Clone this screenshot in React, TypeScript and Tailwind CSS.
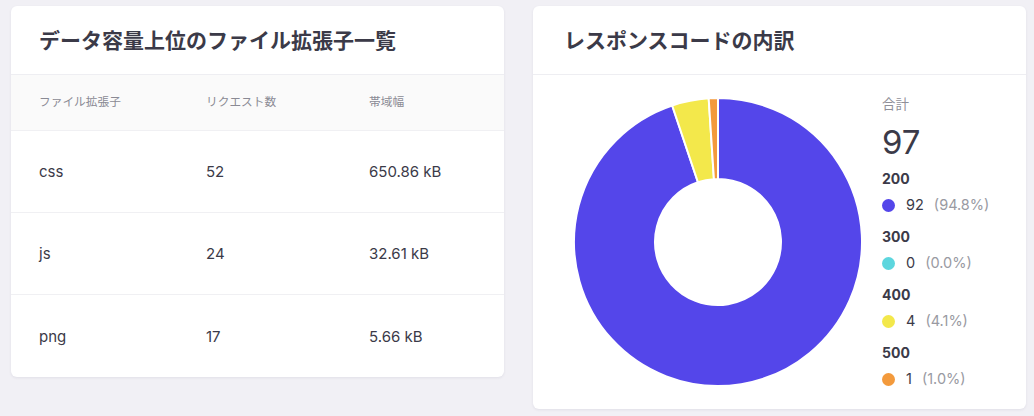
const extensions = [
  { ext: 'css', requests: 52, size: '650.86 kB' },
  { ext: 'js', requests: 24, size: '32.61 kB' },
  { ext: 'png', requests: 17, size: '5.66 kB' },
]

const codes = [
  { code: '200', count: 92, color: '#5446ea' },
  { code: '300', count: 0, color: '#5dd6de' },
  { code: '400', count: 4, color: '#f3e84b' },
  { code: '500', count: 1, color: '#f39a3c' },
]

const total = codes.reduce((s, c) => s + c.count, 0)

function arcPath(cx: number, cy: number, r: number, ir: number, a0: number, a1: number) {
  const p = (rad: number, a: number) => [cx + rad * Math.cos(a), cy + rad * Math.sin(a)]
  const large = a1 - a0 > Math.PI ? 1 : 0
  const [x0, y0] = p(r, a0)
  const [x1, y1] = p(r, a1)
  const [x2, y2] = p(ir, a1)
  const [x3, y3] = p(ir, a0)
  return `M${x0} ${y0} A${r} ${r} 0 ${large} 1 ${x1} ${y1} L${x2} ${y2} A${ir} ${ir} 0 ${large} 0 ${x3} ${y3} Z`
}

function Donut() {
  let start = -Math.PI / 2
  const slices = codes
    .filter((c) => c.count > 0)
    .map((c) => {
      const end = start + (c.count / total) * Math.PI * 2
      const d = arcPath(146, 146, 144, 63, start, end)
      start = end
      return <path key={c.code} d={d} fill={c.color} stroke="#fff" strokeWidth={2} strokeLinejoin="round" />
    })
  return (
    <svg width={292} height={292} viewBox="0 0 292 292">
      {slices}
    </svg>
  )
}

export default function App() {
  return (
    <div
      className="w-[1034px] h-[416px] bg-[#f1f0f5] pl-[11px] pt-[6px] flex items-start gap-[29px] text-[#3b3a48]"
      style={{ fontFamily: 'Inter, "Noto Sans CJK JP", sans-serif' }}
    >
      {/* file extension table */}
      <div className="w-[493px] bg-white rounded-md shadow-[0_1px_3px_rgba(40,40,80,0.08)] overflow-hidden">
        <div className="h-[69px] px-[28px] pt-[2px] flex items-center border-b border-[#eeeef2]">
          <h2 className="text-[21px] font-semibold">データ容量上位のファイル拡張子一覧</h2>
        </div>
        <div className="h-[56px] bg-[#fafafa] px-[28px] flex items-center text-[11.7px] text-[#8a8a94] border-b border-[#f0f0f3]">
          <div className="w-[167px]">ファイル拡張子</div>
          <div className="w-[163px]">リクエスト数</div>
          <div>帯域幅</div>
        </div>
        {extensions.map((r, i) => (
          <div
            key={r.ext}
            className={`h-[82px] px-[28px] pt-[2px] flex items-center text-[15px] ${i < extensions.length - 1 ? 'border-b border-[#f0f0f3]' : ''}`}
          >
            <div className="w-[167px]">{r.ext}</div>
            <div className="w-[163px]">{r.requests}</div>
            <div>{r.size}</div>
          </div>
        ))}
      </div>

      {/* response code breakdown */}
      <div className="w-[493px] bg-white rounded-md shadow-[0_1px_3px_rgba(40,40,80,0.08)]">
        <div className="h-[69px] px-[31px] pt-[2px] flex items-center border-b border-[#eeeef2]">
          <h2 className="text-[21px] font-semibold">レスポンスコードの内訳</h2>
        </div>
        <div className="h-[334px] flex">
          <div className="pl-[39px] pt-[21px] w-[349px]">
            <Donut />
          </div>
          <div className="pt-[18px]">
            <div className="text-[13.5px] text-[#8f8f98] leading-[22px]">合計</div>
            <div className="text-[33px] leading-[38px] mt-[8px]">{total}</div>
            <div className="mt-[8px] flex flex-col gap-[11px]">
              {codes.map((c) => (
                <div key={c.code}>
                  <div className="text-[14px] font-bold leading-[20px]">{c.code}</div>
                  <div className="flex items-center text-[14.5px] leading-[22px] mt-[5px]">
                    <span className="w-[13px] h-[13px] rounded-full mr-[11px]" style={{ backgroundColor: c.color }} />
                    <span>{c.count}</span>
                    <span className="ml-[10px] text-[#999aa2]">({((c.count / total) * 100).toFixed(1)}%)</span>
                  </div>
                </div>
              ))}
            </div>
          </div>
        </div>
      </div>
    </div>
  )
}
